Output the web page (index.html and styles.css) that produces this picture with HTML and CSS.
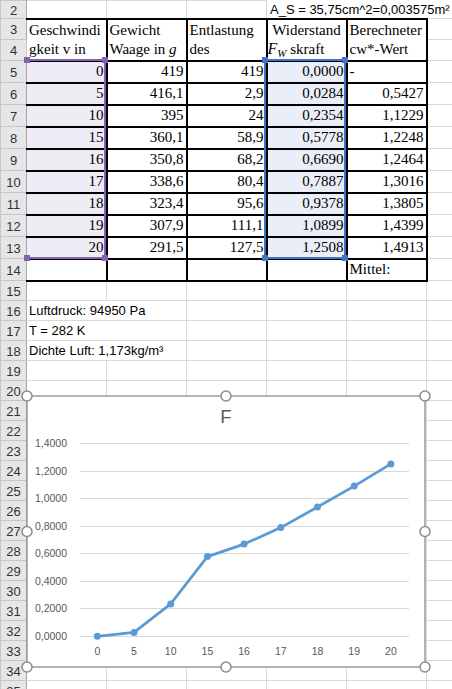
FILE: index.html
```html
<!DOCTYPE html>
<html lang="de">
<head>
	<meta charset="utf-8">
	<title>Luftwiderstand</title>
	<link rel="stylesheet" href="styles.css">
</head>
<body>
	<div class="sheet">
		<table class="grid">
			<colgroup>
				<col class="colHead">
				<col class="colCell">
				<col class="colCell">
				<col class="colCell">
				<col class="colCell">
				<col class="colCell">
				<col class="colCell">
			</colgroup>
			<tbody>
				<tr class="r18">
					<th>2</th>
					<td></td><td></td><td></td>
					<td class="note" colspan="3">A_S = 35,75cm^2=0,003575m²</td>
				</tr>
				<tr class="r21">
					<th>3</th>
					<td class="t head" rowspan="2"><span>Geschwindi</span><span>gkeit v in</span></td>
					<td class="t head" rowspan="2"><span>Gewicht</span><span>Waage in <i>g</i></span></td>
					<td class="t head" rowspan="2"><span>Entlastung</span><span>des</span></td>
					<td class="t head" rowspan="2"><span class="mid">Widerstand</span><span><i class="fw">F<sub>W</sub></i> skraft</span></td>
					<td class="t head" rowspan="2"><span>Berechneter</span><span>cw*-Wert</span></td>
					<td></td>
				</tr>
				<tr class="r21">
					<th>4</th>
					<td></td>
				</tr>
				<tr class="r22">
					<th>5</th>
					<td class="t num selA">0</td><td class="t num">419</td><td class="t num">419</td><td class="t num selD">0,0000</td><td class="t">-</td><td></td>
				</tr>
				<tr class="r22">
					<th>6</th>
					<td class="t num selA">5</td><td class="t num">416,1</td><td class="t num">2,9</td><td class="t num selD">0,0284</td><td class="t num">0,5427</td><td></td>
				</tr>
				<tr class="r22">
					<th>7</th>
					<td class="t num selA">10</td><td class="t num">395</td><td class="t num">24</td><td class="t num selD">0,2354</td><td class="t num">1,1229</td><td></td>
				</tr>
				<tr class="r22">
					<th>8</th>
					<td class="t num selA">15</td><td class="t num">360,1</td><td class="t num">58,9</td><td class="t num selD">0,5778</td><td class="t num">1,2248</td><td></td>
				</tr>
				<tr class="r22">
					<th>9</th>
					<td class="t num selA">16</td><td class="t num">350,8</td><td class="t num">68,2</td><td class="t num selD">0,6690</td><td class="t num">1,2464</td><td></td>
				</tr>
				<tr class="r22">
					<th>10</th>
					<td class="t num selA">17</td><td class="t num">338,6</td><td class="t num">80,4</td><td class="t num selD">0,7887</td><td class="t num">1,3016</td><td></td>
				</tr>
				<tr class="r22">
					<th>11</th>
					<td class="t num selA">18</td><td class="t num">323,4</td><td class="t num">95,6</td><td class="t num selD">0,9378</td><td class="t num">1,3805</td><td></td>
				</tr>
				<tr class="r22">
					<th>12</th>
					<td class="t num selA">19</td><td class="t num">307,9</td><td class="t num">111,1</td><td class="t num selD">1,0899</td><td class="t num">1,4399</td><td></td>
				</tr>
				<tr class="r22">
					<th>13</th>
					<td class="t num selA">20</td><td class="t num">291,5</td><td class="t num">127,5</td><td class="t num selD">1,2508</td><td class="t num">1,4913</td><td></td>
				</tr>
				<tr class="r22">
					<th>14</th>
					<td class="t"></td><td class="t"></td><td class="t"></td><td class="t"></td><td class="t">Mittel:</td><td></td>
				</tr>
				<tr class="r20"><th>15</th><td></td><td></td><td></td><td></td><td></td><td></td></tr>
				<tr class="r20"><th>16</th><td colspan="2">Luftdruck: 94950 Pa</td><td></td><td></td><td></td><td></td></tr>
				<tr class="r20"><th>17</th><td colspan="2">T = 282 K</td><td></td><td></td><td></td><td></td></tr>
				<tr class="r20"><th>18</th><td colspan="2">Dichte Luft: 1,173kg/m³</td><td></td><td></td><td></td><td></td></tr>
				<tr class="r20"><th>19</th><td></td><td></td><td></td><td></td><td></td><td></td></tr>
				<tr class="r20"><th>20</th><td></td><td></td><td></td><td></td><td></td><td></td></tr>
				<tr class="r20"><th>21</th><td></td><td></td><td></td><td></td><td></td><td></td></tr>
				<tr class="r20"><th>22</th><td></td><td></td><td></td><td></td><td></td><td></td></tr>
				<tr class="r20"><th>23</th><td></td><td></td><td></td><td></td><td></td><td></td></tr>
				<tr class="r20"><th>24</th><td></td><td></td><td></td><td></td><td></td><td></td></tr>
				<tr class="r20"><th>25</th><td></td><td></td><td></td><td></td><td></td><td></td></tr>
				<tr class="r20"><th>26</th><td></td><td></td><td></td><td></td><td></td><td></td></tr>
				<tr class="r20"><th>27</th><td></td><td></td><td></td><td></td><td></td><td></td></tr>
				<tr class="r20"><th>28</th><td></td><td></td><td></td><td></td><td></td><td></td></tr>
				<tr class="r20"><th>29</th><td></td><td></td><td></td><td></td><td></td><td></td></tr>
				<tr class="r20"><th>30</th><td></td><td></td><td></td><td></td><td></td><td></td></tr>
				<tr class="r20"><th>31</th><td></td><td></td><td></td><td></td><td></td><td></td></tr>
				<tr class="r20"><th>32</th><td></td><td></td><td></td><td></td><td></td><td></td></tr>
				<tr class="r20"><th>33</th><td></td><td></td><td></td><td></td><td></td><td></td></tr>
				<tr class="r20"><th>34</th><td></td><td></td><td></td><td></td><td></td><td></td></tr>
				<tr class="r20"><th>35</th><td></td><td></td><td></td><td></td><td></td><td></td></tr>
			</tbody>
		</table>

		<!-- Bereiche, die vom Diagramm benutzt werden -->
		<div class="range rangeA">
			<i class="knob tl"></i><i class="knob tr"></i><i class="knob bl"></i><i class="knob br"></i>
		</div>
		<div class="range rangeD">
			<i class="knob tl"></i><i class="knob tr"></i><i class="knob bl"></i><i class="knob br"></i>
		</div>

		<!-- Diagramm F -->
		<div class="chart">
			<svg width="398" height="271" viewBox="0 0 398 271">
				<rect class="frame" x="0" y="0" width="398" height="271"/>
				<text class="title" x="199" y="27">F</text>
				<g class="lines">
					<line x1="53" x2="382" y1="47.5" y2="47.5"/>
					<line x1="53" x2="382" y1="75.5" y2="75.5"/>
					<line x1="53" x2="382" y1="102.5" y2="102.5"/>
					<line x1="53" x2="382" y1="130.5" y2="130.5"/>
					<line x1="53" x2="382" y1="157.5" y2="157.5"/>
					<line x1="53" x2="382" y1="185.5" y2="185.5"/>
					<line x1="53" x2="382" y1="212.5" y2="212.5"/>
					<line x1="53" x2="382" y1="240.5" y2="240.5"/>
				</g>
				<g class="ylab">
					<text x="40" y="51">1,4000</text>
					<text x="40" y="78.5">1,2000</text>
					<text x="40" y="106">1,0000</text>
					<text x="40" y="134">0,8000</text>
					<text x="40" y="161">0,6000</text>
					<text x="40" y="189">0,4000</text>
					<text x="40" y="216">0,2000</text>
					<text x="40" y="244">0,0000</text>
				</g>
				<g class="xlab">
					<text x="70.3" y="259">0</text>
					<text x="107" y="259">5</text>
					<text x="143.7" y="259">10</text>
					<text x="180.4" y="259">15</text>
					<text x="217.1" y="259">16</text>
					<text x="253.8" y="259">17</text>
					<text x="290.5" y="259">18</text>
					<text x="327.2" y="259">19</text>
					<text x="363.9" y="259">20</text>
				</g>
				<polyline class="series" points="70.3,240.3 107,236.4 143.7,207.9 180.4,160.6 217.1,148.1 253.8,131.6 290.5,111 327.2,90.1 363.9,67.9"/>
				<g class="dots">
					<circle cx="70.3" cy="240.3" r="3.5"/>
					<circle cx="107" cy="236.4" r="3.5"/>
					<circle cx="143.7" cy="207.9" r="3.5"/>
					<circle cx="180.4" cy="160.6" r="3.5"/>
					<circle cx="217.1" cy="148.1" r="3.5"/>
					<circle cx="253.8" cy="131.6" r="3.5"/>
					<circle cx="290.5" cy="111" r="3.5"/>
					<circle cx="327.2" cy="90.1" r="3.5"/>
					<circle cx="363.9" cy="67.9" r="3.5"/>
				</g>
				<g class="handles">
					<circle cx="0" cy="0" r="5"/>
					<circle cx="199" cy="0" r="5"/>
					<circle cx="398" cy="0" r="5"/>
					<circle cx="0" cy="135.5" r="5"/>
					<circle cx="398" cy="135.5" r="5"/>
					<circle cx="0" cy="271" r="5"/>
					<circle cx="199" cy="271" r="5"/>
					<circle cx="398" cy="271" r="5"/>
				</g>
			</svg>
		</div>
	</div>
</body>
</html>
```

FILE: styles.css
```css
*, *:after, *:before {
	box-sizing: border-box;
}
html, body {
	margin: 0;
	background: #fff;
	overflow: hidden;
}
.sheet {
	position: relative;
	width: 452px;
	height: 689px;
	overflow: hidden;
	font-family: "Liberation Sans", Arial, sans-serif;
	font-size: 13px;
	color: #000;
}
.grid {
	border-collapse: collapse;
	table-layout: fixed;
	width: 506px;
}
.colHead {
	width: 26px;
}
.colCell {
	width: 80px;
}
.r18 {
	height: 18px;
}
.r20 {
	height: 20px;
}
.r21 {
	height: 21px;
}
.r22 {
	height: 22px;
}
th {
	padding: 2px 0 0 0;
	background: #e6e6e6;
	border: 1px solid #c6c6c6;
	border-right-color: #a6a6a6;
	font-weight: normal;
	color: #333;
	text-align: center;
	vertical-align: middle;
	line-height: 14px;
}
td {
	padding: 0 2px 1px 2px;
	border: 1px solid #d9d9d9;
	white-space: nowrap;
	overflow: visible;
	vertical-align: bottom;
	line-height: 16px;
}
/* Zellen der Messtabelle */
.t {
	border: 2px solid #000;
	font-family: "Liberation Serif", "Times New Roman", serif;
	font-size: 15px;
	line-height: 18px;
	padding-bottom: 2px;
}
.grid tr td.t:nth-child(2) {
	border-left-color: #c6c6c6;
	border-left-width: 1px;
}
.t.head {
	padding-bottom: 1px;
}
.head span {
	display: block;
	height: 19px;
	line-height: 19px;
}
.head .mid {
	text-align: center;
}
.fw {
	font-size: 16px;
	line-height: 10px;
	margin-left: -2px;
}
.fw sub {
	font-size: 11px;
	line-height: 0;
	vertical-align: -3px;
}
.num {
	text-align: right;
}
.selA {
	background: #efecf6;
}
.selD {
	background: #e9eef8;
}
.note {
	padding-left: 3px;
	padding-bottom: 1px;
	line-height: 15px;
	border-top-color: #fff;
}
/* Rahmen der Datenbereiche */
.range {
	position: absolute;
	top: 59px;
	height: 200px;
	border: 2px solid;
	border-left: none;
}
.rangeA {
	left: 26px;
	width: 80px;
	border-color: #7f62b6;
}
.rangeD {
	left: 264px;
	width: 82px;
	border-color: #4472c4;
	border-left: 2px solid #4472c4;
}
.knob {
	position: absolute;
	width: 6px;
	height: 6px;
}
.rangeA .knob {
	background: #7f62b6;
}
.rangeD .knob {
	background: #4472c4;
}
.knob.tl { left: -2px; top: -4px; }
.knob.tr { right: -4px; top: -4px; }
.knob.bl { left: -2px; bottom: -4px; }
.knob.br { right: -4px; bottom: -4px; }
.rangeD .knob.tl, .rangeD .knob.bl { left: -4px; }

.chart {
	position: absolute;
	left: 27px;
	top: 396px;
	width: 398px;
	height: 271px;
	background: #fff;
}
.chart svg {
	display: block;
	overflow: visible;
	font-family: "Liberation Sans", Arial, sans-serif;
}
.frame {
	fill: #fff;
	stroke: #9a9a9a;
	stroke-width: 1.5;
}
.title {
	font-size: 18.5px;
	fill: #595959;
	text-anchor: middle;
}
.lines line {
	stroke: #d9d9d9;
	stroke-width: 1;
}
.ylab text {
	font-size: 10.5px;
	fill: #595959;
	text-anchor: end;
}
.xlab text {
	font-size: 10.5px;
	fill: #595959;
	text-anchor: middle;
}
.series {
	fill: none;
	stroke: #5b9bd5;
	stroke-width: 2.75;
	stroke-linejoin: round;
	stroke-linecap: round;
}
.dots circle {
	fill: #5b9bd5;
}
.handles circle {
	fill: #fff;
	stroke: #8c8c8c;
	stroke-width: 1.5;
}
```
